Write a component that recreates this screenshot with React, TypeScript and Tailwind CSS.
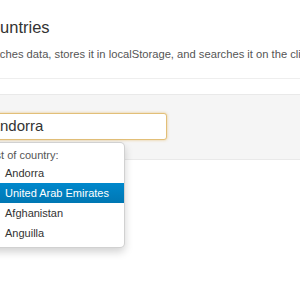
import React from "react";

const items = ["Andorra", "United Arab Emirates", "Afghanistan", "Anguilla"];

export default function App() {
  return (
    <div
      className="w-[300px] h-[300px] overflow-hidden bg-white"
      style={{ fontFamily: '"Liberation Sans", Arial, sans-serif' }}
    >
      <div className="pt-[17px]">
        <h1 className="-ml-[21px] text-[16.5px] leading-[20px] text-[#333] whitespace-nowrap">
          Countries
        </h1>
        <p className="mt-[10px] -ml-[30px] text-[11.2px] leading-[14px] text-[#555] whitespace-nowrap">
          Prefetches data, stores it in localStorage, and searches it on the client.
        </p>
      </div>
      <div className="mt-[17px] border-t border-[#eeeeee]" />
      <div className="mt-[15px] h-[66px] border-y border-[#e9e9e9] bg-[#f5f5f5] pt-[18px]">
        <div className="relative -ml-[17px] w-[184px]">
          <div className="h-[27px] w-[184px] flex items-center rounded-[3px] border border-[#e2bf78] bg-white pl-[6px] text-[15px] text-[#333] shadow-[0_0_3px_rgba(226,180,90,0.7)]">
            Andorra
          </div>
          <div className="absolute left-0 top-full mt-[2px] w-[142px] rounded-[5px] border border-[rgba(0,0,0,0.18)] bg-white py-[4px] shadow-[0_4px_8px_rgba(0,0,0,0.18)]">
            <div className="h-[16px] pl-[3px] text-[11px] leading-[16px] text-[#555] whitespace-nowrap">
              List of country:
            </div>
            {items.map((name, i) => (
              <div
                key={name}
                className={
                  i === 1
                    ? "h-[20px] pl-[21px] text-[11px] leading-[20px] text-white whitespace-nowrap bg-gradient-to-b from-[#0088cc] to-[#0077b3]"
                    : "h-[20px] pl-[21px] text-[11px] leading-[20px] text-[#333] whitespace-nowrap"
                }
              >
                {name}
              </div>
            ))}
          </div>
        </div>
      </div>
    </div>
  );
}
